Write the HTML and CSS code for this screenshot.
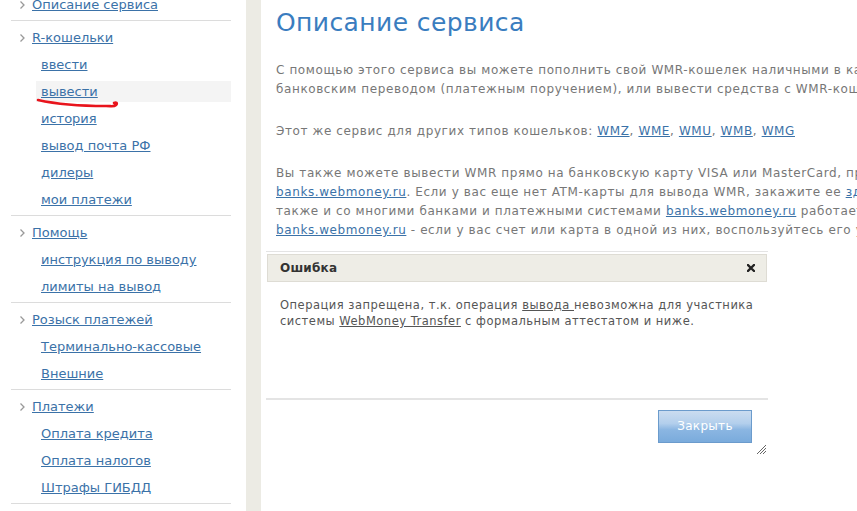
FILE: index.html
```html
<!DOCTYPE html>
<html lang="ru">
<head>
<meta charset="utf-8">
<title>Описание сервиса</title>
<link rel="stylesheet" href="styles.css">
</head>
<body>
<div class="page">
  <aside class="sidebar">
    <div class="section">
      <div class="head"><span class="arr"></span><a href="#">Описание сервиса</a></div>
    </div>
    <div class="section">
      <div class="head"><span class="arr"></span><a href="#">R-кошельки</a></div>
      <div class="sub"><a href="#">ввести</a></div>
      <div class="sub active"><a href="#">вывести</a></div>
      <div class="sub"><a href="#">история</a></div>
      <div class="sub"><a href="#">вывод почта РФ</a></div>
      <div class="sub"><a href="#">дилеры</a></div>
      <div class="sub"><a href="#">мои платежи</a></div>
    </div>
    <div class="section">
      <div class="head"><span class="arr"></span><a href="#">Помощь</a></div>
      <div class="sub"><a href="#">инструкция по выводу</a></div>
      <div class="sub"><a href="#">лимиты на вывод</a></div>
    </div>
    <div class="section">
      <div class="head"><span class="arr"></span><a href="#">Розыск платежей</a></div>
      <div class="sub"><a href="#">Терминально-кассовые</a></div>
      <div class="sub"><a href="#">Внешние</a></div>
    </div>
    <div class="section">
      <div class="head"><span class="arr"></span><a href="#">Платежи</a></div>
      <div class="sub"><a href="#">Оплата кредита</a></div>
      <div class="sub"><a href="#">Оплата налогов</a></div>
      <div class="sub"><a href="#">Штрафы ГИБДД</a></div>
    </div>
    <svg class="scribble" width="90" height="14" viewBox="0 0 90 14"><path d="M2 3 C 20 7, 45 9, 70 9 C 76 9, 78 10, 80 8 C 82 6, 80 5, 78 6" fill="none" stroke="#e8141c" stroke-width="2.6" stroke-linecap="round"/></svg>
  </aside>
  <div class="strip"></div>
  <main class="main">
    <h1 class="title">Описание сервиса</h1>
    <p class="text">С помощью этого сервиса вы можете пополнить свой WMR-кошелек наличными в кассах и терминалах,<br>банковским переводом (платежным поручением), или вывести средства с WMR-кошелька на счет</p>
    <p class="text">Этот же сервис для других типов кошельков: <a href="#">WMZ</a>, <a href="#">WME</a>, <a href="#">WMU</a>, <a href="#">WMB</a>, <a href="#">WMG</a></p>
    <p class="text">Вы также можете вывести WMR прямо на банковскую карту VISA или MasterCard, предоставляемую<br><a href="#">banks.webmoney.ru</a>. Если у вас еще нет ATM-карты для вывода WMR, закажите ее <a href="#">здесь</a>.<br>также и со многими банками и платежными системами <a href="#">banks.webmoney.ru</a> работает<br><a href="#">banks.webmoney.ru</a> - если у вас счет или карта в одной из них, воспользуйтесь его услугами</p>
  </main>
  <div class="dialog">
    <div class="dlg-head">
      <span class="dlg-title">Ошибка</span>
      <svg class="dlg-close" width="8" height="8" viewBox="0 0 8 8"><path d="M1 1 L7 7 M7 1 L1 7" stroke="#222" stroke-width="2.3" stroke-linecap="square"/></svg>
    </div>
    <div class="dlg-body">Операция запрещена, т.к. операция <a href="#">вывода </a>невозможна для участника<br>системы <a href="#">WebMoney Transfer</a> с формальным аттестатом и ниже.</div>
    <div class="dlg-foot">
      <button class="btn" type="button">Закрыть</button>
    </div>
    <svg class="grip" width="11" height="11" viewBox="0 0 11 11"><path d="M10 1 L1 10 M10 4 L4 10 M10 7 L7 10" stroke="#666" stroke-width="1"/></svg>
  </div>
</div>
</body>
</html>
```
FILE: styles.css
```css
html, body {
  margin: 0;
  padding: 0;
  background: #fff;
  overflow: hidden;
}
body {
  width: 857px;
  height: 511px;
  font-family: "DejaVu Sans", Verdana, sans-serif;
}
.page {
  position: relative;
  display: flex;
  height: 511px;
}
.sidebar {
  position: relative;
  width: 246px;
  flex: none;
  box-sizing: border-box;
  padding: 0 15px 0 11px;
  margin-top: -9px;
}
.section {
  padding: 3px 0 2px;
  border-bottom: 1px solid #dcdcdc;
}
.section:first-child {
  padding-top: 0;
}
.head {
  display: flex;
  align-items: center;
  height: 27px;
  padding-left: 9px;
  font-size: 13px;
}
.arr {
  width: 12px;
  height: 8px;
  background: url("data:image/svg+xml;utf8,<svg xmlns='http://www.w3.org/2000/svg' width='5' height='8' viewBox='0 0 5 8'><path d='M0.5 0.5 L4 4 L0.5 7.5' fill='none' stroke='%23999' stroke-width='1.3'/></svg>") no-repeat 0 0;
}
.sub {
  height: 27px;
  display: flex;
  align-items: center;
  font-size: 13px;
}
.sub a {
  display: block;
  line-height: 21px;
  padding-left: 5px;
  margin-left: 25px;
  flex: 1;
}
.sub.active a {
  background: #f4f4f4;
}
a {
  color: #3b72a8;
  text-decoration: underline;
}
.head a, .sub a {
  letter-spacing: 0;
}
.scribble {
  position: absolute;
  left: 36px;
  top: 106px;
}
.strip {
  width: 15px;
  flex: none;
  background: #ecebe4;
}
.main {
  flex: none;
  width: 900px;
  padding-left: 15px;
}
.title {
  margin: 8px 0 0;
  font-size: 25px;
  font-weight: normal;
  color: #3a7dbf;
  line-height: 30px;
  letter-spacing: 0.4px;
}
.text {
  margin: 23px 0 0;
  font-size: 12px;
  line-height: 19px;
  color: #777;
  white-space: nowrap;
  letter-spacing: 0.6px;
}
.text a {
  color: #3b72a8;
}
.dialog {
  position: absolute;
  left: 266px;
  top: 251px;
  width: 502px;
  height: 205px;
  background: #fff;
  border-top: 1px solid #e4e4e4;
}
.dlg-head {
  margin: 2px 1px 0;
  height: 26px;
  background: #eeede6;
  border: 1px solid #dedcd4;
  display: flex;
  align-items: center;
  justify-content: space-between;
  padding: 0 11px 0 12px;
}
.dlg-title {
  font-size: 12px;
  font-weight: bold;
  color: #333;
  letter-spacing: 0.2px;
}
.dlg-body {
  padding: 15px 14px 0;
  height: 101px;
  font-size: 11.5px;
  line-height: 16px;
  color: #555;
  letter-spacing: 0.5px;
  border-bottom: 2px solid #e4e4e4;
}
.dlg-body a {
  color: #555;
}
.dlg-foot {
  display: flex;
  justify-content: flex-end;
  padding: 10px 16px 0;
}
.btn {
  width: 94px;
  height: 33px;
  border: 1px solid #6b9bcc;
  background: linear-gradient(#cadcf0 0%, #b3cfec 40%, #8bb6e2 60%, #7aabdc 100%);
  color: #fff;
  font-family: "DejaVu Sans", Verdana, sans-serif;
  font-size: 12px;
  letter-spacing: 0.3px;
  padding: 0 0 2px;
}
.grip {
  position: absolute;
  right: 1px;
  bottom: 2px;
}
```
